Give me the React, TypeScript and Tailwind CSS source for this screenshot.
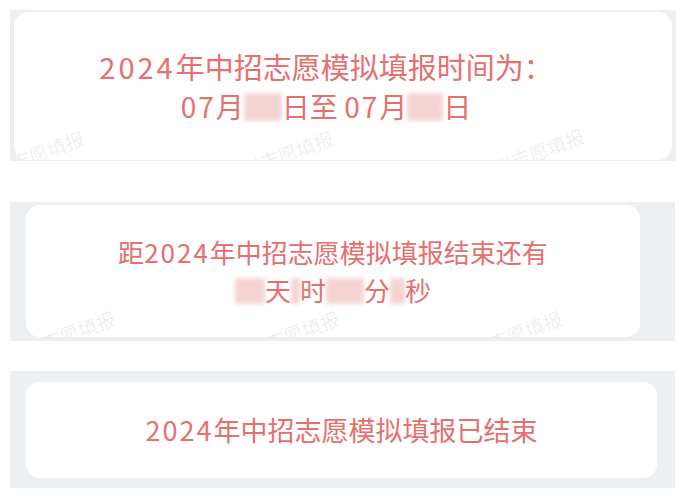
const cjk = { fontFamily: '"Noto Sans CJK SC", "Noto Sans", sans-serif' };

function Blur({ w, className = '' }: { w: number; className?: string }) {
  return (
    <span
      className={`inline-block h-[1em] align-[-0.12em] rounded-[2px] bg-[#f3c9c9] blur-[2px] opacity-80 ${className}`}
      style={{ width: w }}
    />
  );
}

function Num({ children, wide = false }: { children: string; wide?: boolean }) {
  return <span className={wide ? 'tracking-[3px]' : 'tracking-[2px]'}>{children}</span>;
}

function Watermark({ left, top }: { left: number; top: number }) {
  return (
    <span
      className="absolute whitespace-nowrap text-[19px] leading-[28px] text-[#000000]/[0.08] -rotate-[20deg] origin-left select-none"
      style={{ left, top }}
    >
      模拟志愿填报
    </span>
  );
}

export default function App() {
  return (
    <div className="min-h-[500px] bg-white pt-[10px] text-[#e66f6f]" style={cjk}>
      {/* start / end time */}
      <div className="ml-[10px] mr-[8px] bg-[#eeeff1] pt-[2px] pl-[4px] pr-[4px] pb-[1px]">
        <div className="relative h-[148px] overflow-hidden rounded-[14px] bg-white flex flex-col items-center justify-center pr-[34px] leading-[40px]">
          <div className="text-[29px]">
            <Num wide>2024</Num>年中招志愿模拟填报时间为：
          </div>
          <div className="text-[28px]">
            <Num>07</Num>月<Blur w={38} />日至 <Num>07</Num>月<Blur w={36} />日
          </div>
          <Watermark left={-38} top={150} />
          <Watermark left={211} top={150} />
          <Watermark left={462} top={148} />
        </div>
      </div>

      {/* countdown */}
      <div className="mt-[41px] ml-[10px] mr-[9px] bg-[#edf0f3] pt-[3px] pl-[16px] pr-[35px] pb-[4px]">
        <div className="relative h-[132px] overflow-hidden rounded-[14px] bg-white flex flex-col items-center justify-center leading-[38px]">
          <div className="text-[26px]">
            距<Num>2024</Num>年中招志愿模拟填报结束还有
          </div>
          <div className="text-[26px]">
            <Blur w={30} />天<Blur w={9} />时<Blur w={38} />分<Blur w={15} />秒
          </div>
          <Watermark left={-19} top={137} />
          <Watermark left={205} top={137} />
          <Watermark left={428} top={137} />
        </div>
      </div>

      {/* finished */}
      <div className="mt-[30px] ml-[10px] mr-[9px] bg-[#edf0f3] pt-[11px] pl-[16px] pr-[18px] pb-[10px]">
        <div className="h-[96px] rounded-[14px] bg-white flex items-center justify-center">
          <div className="text-[27px]">
            <Num>2024</Num>年中招志愿模拟填报已结束
          </div>
        </div>
      </div>
    </div>
  );
}
